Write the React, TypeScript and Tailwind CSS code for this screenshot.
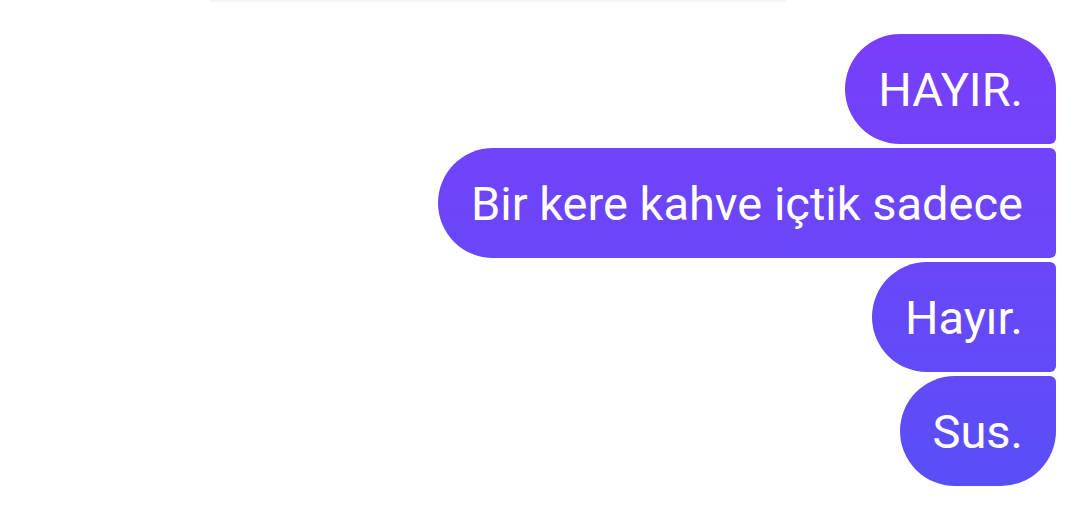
export default function App() {
  const bubble =
    "h-[110px] flex items-center px-[33px] text-white text-[47px] leading-none bg-fixed bg-linear-to-b from-[#7b3cfb] to-[#564ff6] whitespace-nowrap";
  return (
    <div className="w-[1080px] h-[508px] bg-white overflow-hidden" style={{ fontFamily: "Roboto, 'Noto Sans', sans-serif" }}>
      <div className="flex">
        <div className="ml-[210px] w-[576px] h-[2px] bg-[#f4f4f4]" />
      </div>
      <div className="flex flex-col items-end gap-[4px] pt-[32px] pr-[24px]">
        <div className={`${bubble} rounded-tl-[55px] rounded-tr-[55px] rounded-bl-[55px] rounded-br-[6px]`}>HAYIR.</div>
        <div className={`${bubble} rounded-tl-[55px] rounded-bl-[55px] rounded-tr-[6px] rounded-br-[6px]`}>Bir kere kahve içtik sadece</div>
        <div className={`${bubble} rounded-tl-[55px] rounded-bl-[55px] rounded-tr-[6px] rounded-br-[6px]`}>Hayır.</div>
        <div className={`${bubble} rounded-tl-[55px] rounded-bl-[55px] rounded-tr-[6px] rounded-br-[55px]`}>Sus.</div>
      </div>
    </div>
  );
}
